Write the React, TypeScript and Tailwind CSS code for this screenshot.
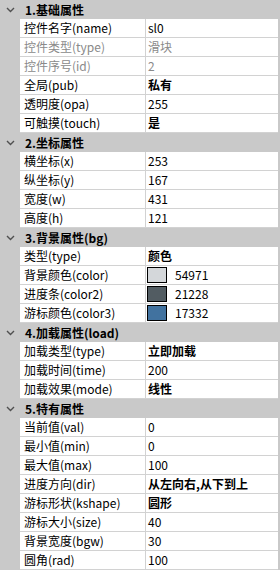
import React from "react";

type Item = {
  label: string;
  value: string;
  bold?: boolean;
  disabled?: boolean;
  swatch?: string;
};

type Section = { title: string; items: Item[] };

const sections: Section[] = [
  {
    title: "1.基础属性",
    items: [
      { label: "控件名字(name)", value: "sl0" },
      { label: "控件类型(type)", value: "滑块", disabled: true },
      { label: "控件序号(id)", value: "2", disabled: true },
      { label: "全局(pub)", value: "私有", bold: true },
      { label: "透明度(opa)", value: "255" },
      { label: "可触摸(touch)", value: "是", bold: true },
    ],
  },
  {
    title: "2.坐标属性",
    items: [
      { label: "横坐标(x)", value: "253" },
      { label: "纵坐标(y)", value: "167" },
      { label: "宽度(w)", value: "431" },
      { label: "高度(h)", value: "121" },
    ],
  },
  {
    title: "3.背景属性(bg)",
    items: [
      { label: "类型(type)", value: "颜色", bold: true },
      { label: "背景颜色(color)", value: "54971", swatch: "bg-[#d4d7da]" },
      { label: "进度条(color2)", value: "21228", swatch: "bg-[#525c62]" },
      { label: "游标颜色(color3)", value: "17332", swatch: "bg-[#41729f]" },
    ],
  },
  {
    title: "4.加载属性(load)",
    items: [
      { label: "加载类型(type)", value: "立即加载", bold: true },
      { label: "加载时间(time)", value: "200" },
      { label: "加载效果(mode)", value: "线性", bold: true },
    ],
  },
  {
    title: "5.特有属性",
    items: [
      { label: "当前值(val)", value: "0" },
      { label: "最小值(min)", value: "0" },
      { label: "最大值(max)", value: "100" },
      { label: "进度方向(dir)", value: "从左向右,从下到上", bold: true },
      { label: "游标形状(kshape)", value: "圆形", bold: true },
      { label: "游标大小(size)", value: "40" },
      { label: "背景宽度(bgw)", value: "30" },
      { label: "圆角(rad)", value: "100" },
    ],
  },
];

function Chevron() {
  return (
    <svg width="9" height="6" viewBox="0 0 9 6" className="block">
      <path d="M1 1 L4.5 4.5 L8 1" fill="none" stroke="#505050" strokeWidth="1.4" />
    </svg>
  );
}

export default function App() {
  return (
    <div className="w-[280px] h-[570px] overflow-hidden bg-[#c9c9c9] pr-[2px] font-['Microsoft_YaHei','Noto_Sans_CJK_SC',sans-serif] text-[12px] leading-none text-black">
      {sections.map((s) => (
        <div key={s.title}>
          <div className="h-[19px] flex items-center">
            <div className="w-[20px] flex justify-center">
              <Chevron />
            </div>
            <span className="pl-[5px] font-bold">{s.title}</span>
          </div>
          {s.items.map((it) => (
            <div key={it.label} className="h-[19px] flex pl-[20px]">
              <div className="w-[126px] bg-white border-b border-r border-[#d2d2d2] pl-[4px] flex items-center whitespace-nowrap">
                <span className={it.disabled ? "text-[#8a8a8a]" : ""}>{it.label}</span>
              </div>
              <div className="flex-1 bg-white border-b border-[#d2d2d2] pl-[2px] flex items-center whitespace-nowrap">
                {it.swatch ? (
                  <div className="flex items-center">
                    <div className={`ml-[-1px] w-[20px] h-[16px] border border-black ${it.swatch}`} />
                    <span className="ml-[8px]">{it.value}</span>
                  </div>
                ) : (
                  <span
                    className={
                      (it.disabled ? "text-[#8a8a8a] " : "") + (it.bold ? "font-bold" : "")
                    }
                  >
                    {it.value}
                  </span>
                )}
              </div>
            </div>
          ))}
        </div>
      ))}
    </div>
  );
}
